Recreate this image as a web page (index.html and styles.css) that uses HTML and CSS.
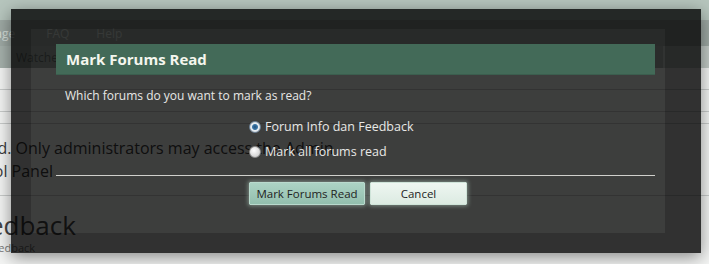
FILE: index.html
```html
<!DOCTYPE html>
<html lang="en">
<head>
    <meta charset="UTF-8">
    <title>Mark Forums Read</title>
    <link rel="stylesheet" href="styles.css">
</head>
<body>
    <div class="page">
        <div class="header"></div>
        <div class="nav">
            <span class="nav-item first">Usercp Message</span>
            <span class="nav-item">FAQ</span>
            <span class="nav-item">Help</span>
        </div>
        <div class="subnav">
            <span class="sub-item">Watched Threads</span>
            <span class="search-box"></span>
        </div>
        <div class="content">
            <div class="row"></div>
            <div class="row"></div>
            <div class="row short"></div>
            <div class="notice">
                <div class="notice-line">Access denied. Only administrators may access the Admin</div>
                <div class="notice-line second">Control Panel</div>
            </div>
            <div class="heading">Forum Info dan Feedback</div>
            <div class="subheading">Info dan Feedback</div>
        </div>
    </div>

    <div class="overlay">
        <div class="dialog">
            <div class="dialog-title">Mark Forums Read</div>
            <p class="prompt">Which forums do you want to mark as read?</p>
            <div class="options">
                <label class="option"><input type="radio" name="mark" checked> Forum Info dan Feedback</label>
                <label class="option"><input type="radio" name="mark"> Mark all forums read</label>
            </div>
            <hr>
            <div class="buttons">
                <button class="btn primary">Mark Forums Read</button>
                <button class="btn">Cancel</button>
            </div>
        </div>
    </div>
</body>
</html>
```

FILE: styles.css
```css
body {
    margin: 0;
    font-family: "Open Sans", "Noto Sans", sans-serif;
    background: #f4f5f4;
    overflow: hidden;
}
.page {
    width: 709px;
    height: 264px;
    overflow: hidden;
    background: #f4f5f4;
}
.header {
    height: 20px;
    background: #b6c5bd;
}
.nav {
    height: 26px;
    background: #9ea9a4;
    display: flex;
    align-items: center;
    font-size: 12px;
    color: #d6dfda;
    white-space: nowrap;
}
.nav-item {
    margin-right: 27px;
}
.nav-item.first {
    margin-left: -76px;
    margin-right: 31px;
}
.subnav {
    height: 22px;
    background: #a6b1ac;
    display: flex;
    align-items: center;
    justify-content: space-between;
    font-size: 12px;
    color: #6a726e;
}
.sub-item {
    margin-left: 16px;
}
.search-box {
    width: 46px;
    height: 22px;
    background: #c2cac6;
}
.content {
    background: #f4f5f4;
}
.row {
    height: 21px;
    border-bottom: 1px solid #c9cccb;
}
.row.short {
    height: 11px;
}
.notice {
    margin-top: 13px;
    font-size: 16px;
    line-height: 23px;
    color: #3c3c3c;
    white-space: nowrap;
    padding-bottom: 12px;
    border-bottom: 1px solid #c9cccb;
}
.notice-line {
    margin-left: -98px;
}
.notice-line.second {
    margin-left: -48px;
}
.heading {
    margin-left: -233px;
    margin-top: 13px;
    font-size: 26px;
    line-height: 32px;
    color: #444;
    white-space: nowrap;
}
.subheading {
    margin-left: -59px;
    font-size: 11px;
    line-height: 13px;
    color: #777;
    white-space: nowrap;
}

/* modal */
.overlay {
    position: absolute;
    left: 11px;
    top: 9px;
    width: 690px;
    height: 244px;
    box-sizing: border-box;
    border-style: solid;
    border-color: rgba(0, 0, 0, 0.8);
    border-width: 20px 36px 20px 20px;
    background: rgba(0, 0, 0, 0.75);
    background-clip: padding-box;
    box-shadow: 0 4px 16px rgba(0, 0, 0, 0.45);
}
.dialog {
    padding: 15px 10px 0 25px;
    color: #e8e8e6;
}
.dialog-title {
    height: 31px;
    line-height: 31px;
    background: #436a58;
    border-bottom: 1px solid #3b5e4e;
    box-sizing: border-box;
    padding-left: 10px;
    font-size: 15px;
    font-weight: bold;
    color: #f4f6ee;
}
.prompt {
    margin: 12px 0 0 9px;
    font-size: 12px;
    line-height: 18px;
}
.options {
    margin: 9px 0 0 193px;
}
.option {
    display: flex;
    align-items: center;
    height: 25px;
    font-size: 12.5px;
}
.option input {
    appearance: none;
    -webkit-appearance: none;
    width: 12px;
    height: 12px;
    margin: 0 4px 0 0;
    border-radius: 50%;
    border: 1px solid #8a8a8a;
    box-sizing: border-box;
    background: radial-gradient(circle at 40% 35%, #ffffff, #d4d4d4 70%, #b8b8b8);
}
.option input:checked {
    border-color: #6c8094;
    background: radial-gradient(circle, #1f4f7c 0, #3d78a8 2.5px, #e8eef3 3.5px, #c8ced3 6px);
}
hr {
    margin: 11px 0 0 0;
    border: none;
    border-top: 1px solid #d0d0cc;
    height: 0;
}
.buttons {
    display: flex;
    justify-content: center;
    gap: 5px;
    margin-top: 6px;
    padding-left: 5px;
}
.btn {
    height: 23px;
    padding: 0;
    font-family: "Open Sans", "Noto Sans", sans-serif;
    font-size: 11.5px;
    color: #1e1e1e;
    border: 1px solid #cfe4d9;
    border-radius: 1px;
    background: linear-gradient(#eef6f1, #dcebe2);
    box-shadow: 0 0 4px 1px rgba(200, 235, 215, 0.45);
    width: 97px;
}
.btn.primary {
    width: 116px;
    background: linear-gradient(#acd3c4, #93bfae);
    border-color: #b9dacd;
}
```
